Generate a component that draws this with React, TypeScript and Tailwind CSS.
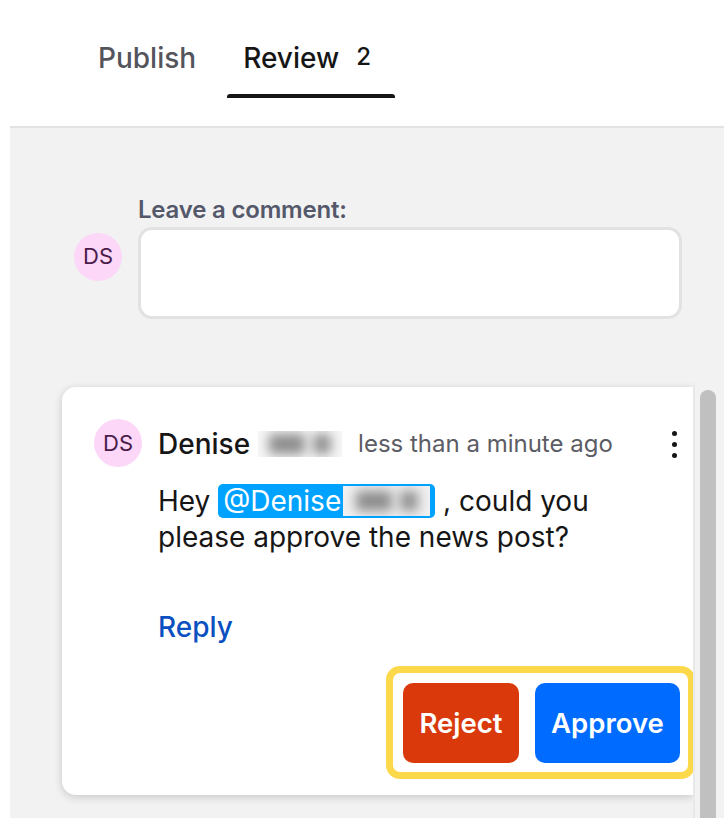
export default function App() {
  const Blur = ({ light }: { light?: boolean }) => (
    <span className={`inline-flex items-center gap-[8px] justify-center overflow-hidden align-middle ${light ? "bg-[#f1f1f1] h-[30px] w-[87px]" : "bg-[#f7f7f7] h-[26px] w-[84px]"}`}>
      <span className="block w-[36px] h-[20px] bg-[#8c8c8c] blur-[6px]" />
      <span className="block w-[18px] h-[20px] bg-[#909090] blur-[6px]" />
    </span>
  );
  const Avatar = () => (
    <div className="w-[48px] h-[48px] shrink-0 rounded-full bg-[#fcd7f8] text-[#4a1b4a] text-[22px] flex items-center justify-center">DS</div>
  );
  return (
    <div className="relative w-[724px] h-[818px] overflow-hidden bg-white flex flex-col font-['Inter',sans-serif]">
      <div className="h-[126px] shrink-0 flex items-start pl-[98px] pt-[40px] text-[28px] leading-[36px] font-medium">
        <span className="text-[#54545c]">Publish</span>
        <div className="relative ml-[47px] flex items-start text-[#161616]">
          <span>Review</span>
          <span className="ml-[17px] text-[24px] leading-[34px]">2</span>
          <div className="absolute left-[-16px] top-[54px] w-[168px] h-[4px] rounded-t-[3px] bg-[#161616]" />
        </div>
      </div>
      <div className="flex-1 ml-[10px] bg-[#f2f2f2] border-t-2 border-[#e2e2e2] flex flex-col relative">
        <div className="flex items-center pl-[64px] pt-[66px]">
          <div className="mt-0"><Avatar /></div>
          <div className="ml-[16px] flex flex-col">
            <span className="mt-[1px] text-[24px] leading-[30px] font-semibold text-[#54586a] tracking-[-0.2px]">Leave a comment:</span>
            <div className="mt-[2px] w-[544px] h-[92px] rounded-[14px] bg-white border-[3px] border-[#e2e2e2]" />
          </div>
        </div>
        <div className="ml-[52px] mt-[68px] w-[631px] h-[408px] bg-white rounded-l-[14px] shadow-[0_2px_8px_rgba(0,0,0,0.18)] flex items-start pl-[32px] pt-[32px]">
          <Avatar />
          <div className="ml-[16px] flex flex-col flex-1">
            <div className="flex items-center h-[48px] mt-[1px]">
              <span className="text-[28px] font-medium text-[#161616]">Denise</span>
              <span className="ml-[8px] flex"><Blur /></span>
              <span className="ml-[16px] text-[24px] text-[#5c5c64]">less than a minute ago</span>
              <div className="ml-[59px] flex flex-col gap-[6px]">
                <span className="block w-[5px] h-[5px] rounded-full bg-[#161616]" />
                <span className="block w-[5px] h-[5px] rounded-full bg-[#161616]" />
                <span className="block w-[5px] h-[5px] rounded-full bg-[#161616]" />
              </div>
            </div>
            <div className="mt-[15px] text-[28px] leading-[36px] text-[#161616] w-[480px]">
              Hey <span className="inline-flex items-center h-[34px] align-top mt-[1px] pl-[5px] pr-[5px] rounded-[5px] bg-[#00a2ff] text-white">@Denise<span className="inline-flex ml-[2px]"><Blur light /></span></span> , could you
              <br />
              please approve the news post?
            </div>
            <div className="mt-[54px] text-[28px] leading-[36px] font-medium text-[#0a50c0]">Reply</div>
          </div>
        </div>
        <div className="absolute left-[376px] top-[538px] w-[309px] h-[113px] rounded-[14px] border-[7px] border-[#fcd94a] flex items-center pl-[10px] gap-[16px] text-white text-[27.5px] font-semibold">
          <div className="w-[116px] h-[80px] rounded-[10px] bg-[#d9390b] flex items-center justify-center pt-[3px]">Reject</div>
          <div className="w-[145px] h-[80px] rounded-[10px] bg-[#006cff] flex items-center justify-center pt-[3px]">Approve</div>
        </div>
        <div className="absolute left-[683px] top-[257px] bottom-0 w-[31px] bg-[#f2f2f2] border-l-2 border-[#e8e8e8]">
          <div className="ml-[5px] mt-[5px] w-[16px] h-[600px] rounded-full bg-[#c0c0c0]" />
        </div>
      </div>
    </div>
  );
}
